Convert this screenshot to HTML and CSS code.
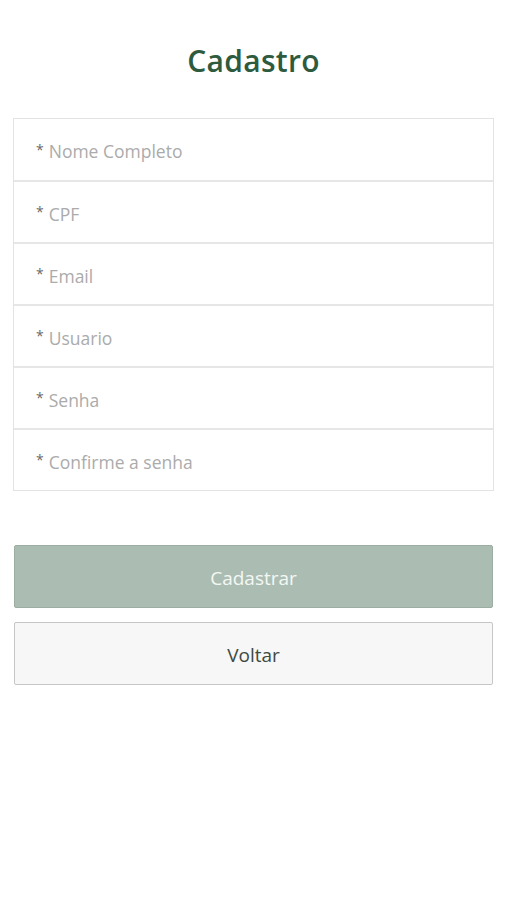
FILE: index.html
```html
<!doctype html>
<html>
<head>
<meta charset="utf-8">
<title>Cadastro</title>
<link rel="stylesheet" href="styles.css">
</head>
<body>
<div class="wrap">
    <h1 class="title">Cadastro</h1>
    <div class="form">
        <div class="row"><span class="req">*</span><span>Nome Completo</span></div>
        <div class="row"><span class="req">*</span><span>CPF</span></div>
        <div class="row"><span class="req">*</span><span>Email</span></div>
        <div class="row"><span class="req">*</span><span>Usuario</span></div>
        <div class="row"><span class="req">*</span><span>Senha</span></div>
        <div class="row"><span class="req">*</span><span>Confirme a senha</span></div>
    </div>
    <div class="btns">
        <a href="javascript:;" class="btn btn-main">Cadastrar</a>
        <a href="javascript:;" class="btn btn-back">Voltar</a>
    </div>
</div>
</body>
</html>
```
FILE: styles.css
```css
*{ margin:0; padding:0; box-sizing:border-box;}
a{ text-decoration:none;}
body{ background:#fff; font-family:"Open Sans","Noto Sans",sans-serif;}
.wrap{ padding:38px 13px 0 13px;}
.title{ text-align:center; font-size:30px; font-weight:600; color:#2e5a3d; line-height:46px; letter-spacing:0.3px;}
.form{ margin-top:34px; border:1px solid #e3e3e3;}
.form .row{ height:62px; border-top:2px solid #e6e6e6; padding:3px 0 0 22px; display:flex; align-items:center; font-size:17.5px; color:#ababab;}
.form .row:first-child{ border-top:0; height:61px;}
.form .req{ color:#6a6a6a; font-size:14px; margin-right:5px; position:relative; top:-2px;}
.btns{ margin-top:54px; padding:0 1px; display:flex; flex-direction:column; gap:14px;}
.btn{ display:flex; align-items:center; justify-content:center; height:63px; padding-top:2px; border-radius:2px; font-size:19px;}
.btn-main{ background:#abbdb2; border:1px solid #9cada2; color:#f4f7f4;}
.btn-back{ background:#f7f7f7; border:1px solid #c6c6c6; color:#3e4a42;}
```
